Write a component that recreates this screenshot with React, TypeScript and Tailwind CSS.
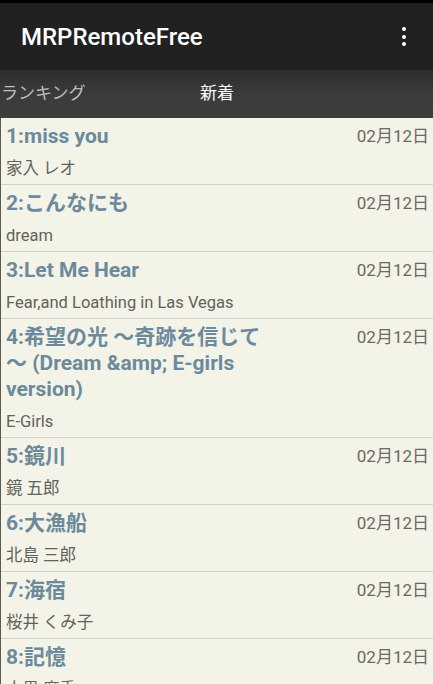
import React from "react";

type Song = { title: string; artist: string; date: string };

const songs: Song[] = [
    { title: "1:miss you", artist: "家入 レオ", date: "02月12日" },
    { title: "2:こんなにも", artist: "dream", date: "02月12日" },
    { title: "3:Let Me Hear", artist: "Fear,and Loathing in Las Vegas", date: "02月12日" },
    { title: "4:希望の光 ～奇跡を信じて～ (Dream &amp; E-girls version)", artist: "E-Girls", date: "02月12日" },
    { title: "5:鏡川", artist: "鏡 五郎", date: "02月12日" },
    { title: "6:大漁船", artist: "北島 三郎", date: "02月12日" },
    { title: "7:海宿", artist: "桜井 くみ子", date: "02月12日" },
    { title: "8:記憶", artist: "大黒 摩季", date: "02月12日" },
];

const font = { fontFamily: "Roboto, 'Noto Sans CJK JP', sans-serif" };

const SongRow: React.FC<{ song: Song }> = ({ song }) => (
    <div className="flex shrink-0 flex-col border-b border-[#d2d2cc] pl-[5px] pr-[4px]">
        <div className="flex items-start justify-between pt-[5px]">
            <div className="w-[272px] text-[21px] leading-[26px] font-bold text-[#6c8a9c]">
                {song.title}
            </div>
            <div className="pt-[1px] text-[17px] leading-[24px] text-[#6a6a64]">
                {song.date}
            </div>
        </div>
        <div className="pt-[7px] pb-[3px] text-[16.5px] leading-[25px] text-[#62625c]">
            {song.artist}
        </div>
    </div>
);

export default function App() {
    return (
        <div className="h-[684px] w-[433px] overflow-hidden bg-[#212121]" style={font}>
            <div className="h-[3px] bg-black" />
            <div className="flex h-[67px] items-center justify-between bg-[#212121] pl-[21px] pr-[27px]">
                <div className="text-[24px] font-medium text-white">MRPRemoteFree</div>
                <div className="flex flex-col items-center gap-[3.5px]">
                    <span className="h-[4px] w-[4px] rounded-full bg-white" />
                    <span className="h-[4px] w-[4px] rounded-full bg-white" />
                    <span className="h-[4px] w-[4px] rounded-full bg-white" />
                </div>
            </div>
            <div className="flex h-[48px] items-center bg-gradient-to-b from-[#2e2e2e] via-[#3b3b3b] to-[#3d3d3d] text-[17px]">
                <div className="w-[200px] pl-[1px] text-[#bdbdbd]">ランキング</div>
                <div className="text-white">新着</div>
            </div>
            <div className="flex h-[566px] flex-col overflow-hidden border-l border-[#5a5a55] bg-[#f3f3e7]">
                {songs.map((s) => (
                    <SongRow key={s.title} song={s} />
                ))}
            </div>
        </div>
    );
}
